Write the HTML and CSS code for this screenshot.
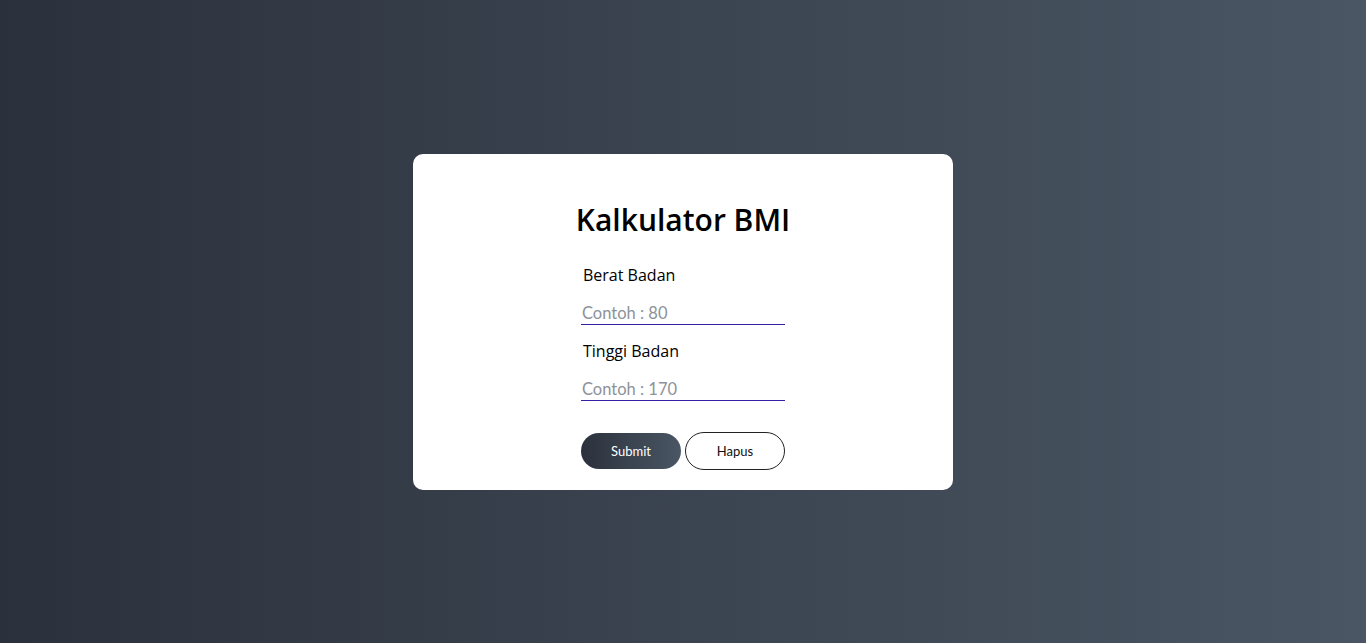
FILE: index.html
```html
<!DOCTYPE html>
<html lang="id">
<head>
<meta charset="utf-8">
<title>Kalkulator BMI</title>
<link rel="stylesheet" href="styles.css">
</head>
<body>
<main class="page">
  <div class="card">
    <h1 class="title">Kalkulator BMI</h1>
    <form class="form">
      <label class="label" for="berat">Berat Badan</label>
      <input class="field" id="berat" type="text" placeholder="Contoh : 80">
      <label class="label" for="tinggi">Tinggi Badan</label>
      <input class="field" id="tinggi" type="text" placeholder="Contoh : 170">
      <div class="actions">
        <button type="button" class="btn btn-submit">Submit</button>
        <button type="reset" class="btn btn-reset">Hapus</button>
      </div>
    </form>
  </div>
</main>
</body>
</html>
```
FILE: styles.css
```css
* { box-sizing: border-box; }
html, body { margin: 0; height: 100%; }
body {
  background: linear-gradient(to right, #2b313c, #4a5664);
  font-family: "Open Sans", "Noto Sans", sans-serif;
}
.page {
  height: 100%;
  display: flex;
  align-items: center;
  justify-content: center;
}
.card {
  width: 540px;
  height: 336px;
  background: #fff;
  border-radius: 10px;
  display: flex;
  flex-direction: column;
  align-items: center;
  padding-top: 44px;
}
.title {
  margin: 0;
  font-size: 30px;
  font-weight: 600;
  color: #000;
  line-height: 44px;
}
.form {
  width: 204px;
  display: flex;
  flex-direction: column;
  margin-top: 21px;
}
.label {
  font-size: 16px;
  padding-left: 2px;
  line-height: 24px;
  color: #000;
}
.field {
  margin-top: 12px;
  margin-bottom: 14px;
  border: none;
  border-bottom: 1px solid #3322a8;
  outline: none;
  padding: 4px 1px 0;
  height: 26px;
  font-family: "Lato", sans-serif;
  font-size: 16.5px;
}
.field::placeholder { color: #8d9299; }
.actions {
  display: flex;
  gap: 4px;
  align-items: center;
  margin-top: 17px;
}
.btn {
  width: 100px;
  border-radius: 20px;
  font-family: "Lato", sans-serif;
  font-size: 13px;
  cursor: pointer;
}
.btn-submit {
  height: 36px;
  border: none;
  color: #fff;
  background: linear-gradient(to right, #2b313c, #4a5664);
}
.btn-reset {
  height: 38px;
  border: 1px solid #222;
  background: #fff;
  color: #111;
}
```
